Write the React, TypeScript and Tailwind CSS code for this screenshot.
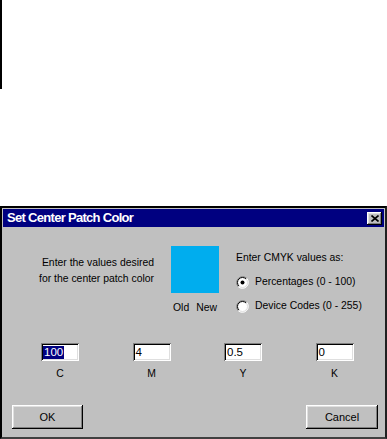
import React from "react";

function Radio({ checked }: { checked?: boolean }) {
  return (
    <svg width="13" height="13" viewBox="0 0 13 13" className="shrink-0">
      <circle cx="6.5" cy="6.5" r="5.5" fill="#ffffff" />
      <path d="M2.26 10.74 A6 6 0 0 1 10.74 2.26" fill="none" stroke="#808080" strokeWidth="1" />
      <path d="M10.74 2.26 A6 6 0 0 1 2.26 10.74" fill="none" stroke="#ffffff" strokeWidth="1" />
      <path d="M2.96 10.04 A5 5 0 0 1 10.04 2.96" fill="none" stroke="#000000" strokeWidth="1" />
      <path d="M10.04 2.96 A5 5 0 0 1 2.96 10.04" fill="none" stroke="#dfdfdf" strokeWidth="1" />
      {checked && <circle cx="6.5" cy="6.5" r="2" fill="#000000" />}
    </svg>
  );
}

function Field({ value, label, selected }: { value: string; label: string; selected?: boolean }) {
  return (
    <div className="flex flex-col items-center w-[38px]">
      <div className="w-[38px] h-[18px] bg-white flex items-center shadow-[inset_1px_1px_#808080,inset_-1px_-1px_#ffffff,inset_2px_2px_#000000,inset_-2px_-2px_#dfdfdf] text-[11.5px] text-black">
        {selected ? (
          <span className="ml-[2px] px-[1px] bg-[#000080] text-white leading-[13px]">{value}</span>
        ) : (
          <span className="ml-[3px] leading-[13px]">{value}</span>
        )}
      </div>
      <div className="mt-[7px] text-[10.4px] leading-[12px] text-black">{label}</div>
    </div>
  );
}

function Button({ children, w }: { children: React.ReactNode; w: string }) {
  return (
    <div
      className={`${w} h-[24px] flex items-center justify-center text-[11px] text-black bg-[#c0c0c0] shadow-[inset_-1px_-1px_#000000,inset_1px_1px_#ffffff,inset_-2px_-2px_#808080,inset_2px_2px_#dfdfdf]`}
    >
      {children}
    </div>
  );
}

export default function App() {
  return (
    <div className="w-[387px] h-[439px] bg-white flex flex-col font-['Liberation_Sans',Arial,sans-serif]">
      <div className="w-[2px] h-[89px] bg-black" />
      <div className="mt-[117px] h-[233px] w-full flex flex-col bg-[#c0c0c0] border-2 border-l-black border-t-black border-r-[#202020] border-b-[#404040]">
        <div className="p-[1px]">
          <div className="h-[18px] bg-[#000080] flex items-center justify-between pl-[4px] pr-[2px]">
            <span className="text-white font-bold text-[13px] leading-[18px] tracking-[-0.7px]">
              Set Center Patch Color
            </span>
            <div className="w-[15px] h-[13px] bg-[#c0c0c0] flex items-center justify-center shadow-[inset_-1px_-1px_#000000,inset_1px_1px_#ffffff,inset_-2px_-2px_#808080,inset_2px_2px_#dfdfdf]">
              <svg width="8" height="7" viewBox="0 0 8 7">
                <path d="M0.5 0.5 L7.5 6.5 M7.5 0.5 L0.5 6.5" stroke="#000" strokeWidth="1.6" fill="none" />
              </svg>
            </div>
          </div>
        </div>

        <div className="mt-[18px] flex text-black">
          <div className="w-[152px] mt-[9px] text-right text-[10.4px] leading-[16px]">
            <div>Enter the values desired</div>
            <div>for the center patch color</div>
          </div>
          <div className="ml-[17px] w-[48px] flex flex-col">
            <div className="w-[48px] h-[47px] bg-[#00adee]" />
            <div className="mt-[9px] flex justify-between px-[2px] text-[10.4px] leading-[12px]">
              <span>Old</span>
              <span>New</span>
            </div>
          </div>
          <div className="ml-[17px] flex flex-col mt-[4px] text-[10.4px] leading-[16px]">
            <div>Enter CMYK values as:</div>
            <div className="mt-[8px] h-[16px] flex items-center gap-[6px]">
              <Radio checked />
              <span>Percentages (0 - 100)</span>
            </div>
            <div className="mt-[8px] h-[16px] flex items-center gap-[6px]">
              <Radio />
              <span>Device Codes (0 - 255)</span>
            </div>
          </div>
        </div>

        <div className="mt-[29px] ml-[39px] flex gap-[53.5px]">
          <Field value="100" label="C" selected />
          <Field value="4" label="M" />
          <Field value="0.5" label="Y" />
          <Field value="0" label="K" />
        </div>

        <div className="mt-[25px] flex justify-between pl-[10px] pr-[7px]">
          <Button w="w-[71px]">OK</Button>
          <Button w="w-[72px]">Cancel</Button>
        </div>
      </div>
    </div>
  );
}
